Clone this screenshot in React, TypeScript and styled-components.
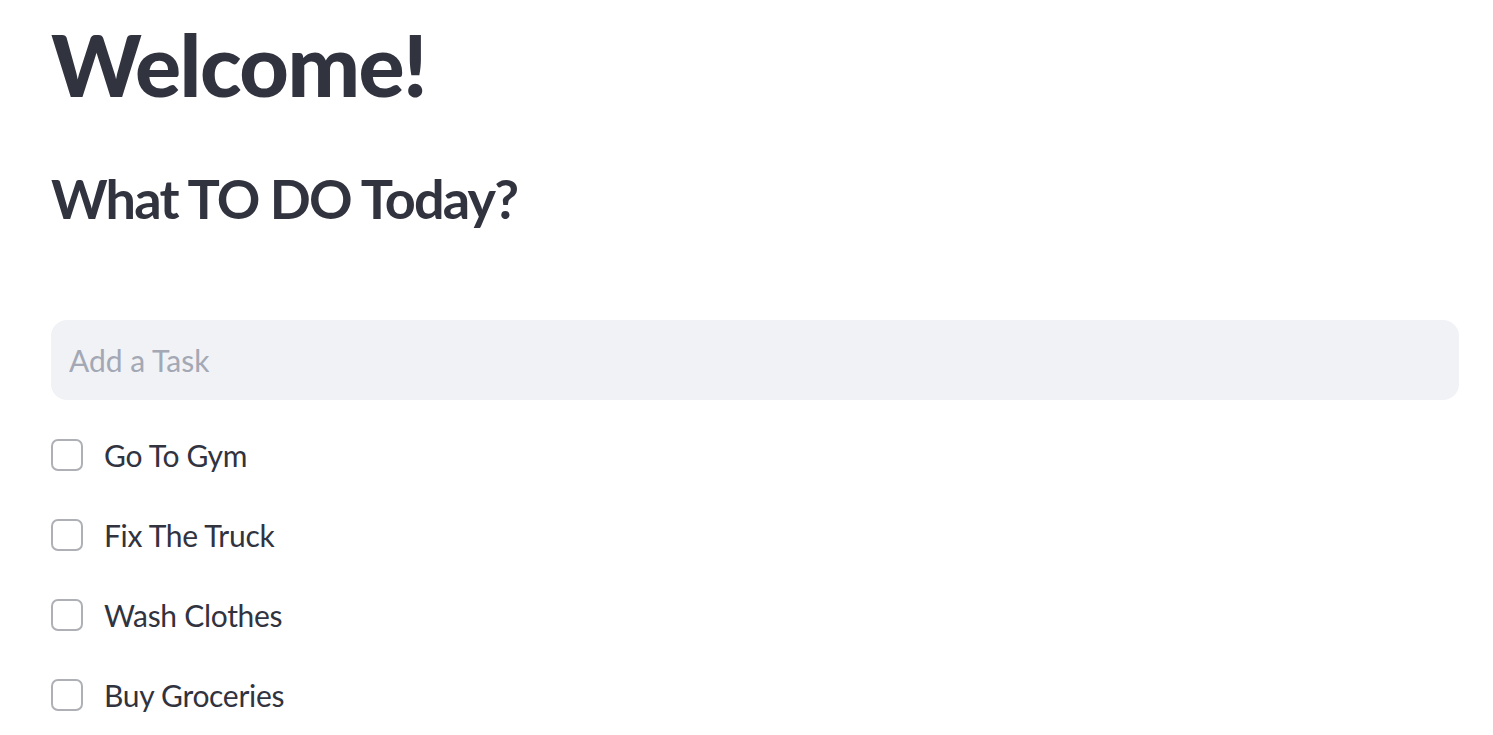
import React from "react";
import styled, { createGlobalStyle } from "styled-components";

const Global = createGlobalStyle`
  html, body { margin: 0; padding: 0; background: #ffffff; }
  body { font-family: "Lato", "Noto Sans", sans-serif; color: #31333f; }
`;

const Main = styled.main`
  display: flex;
  flex-direction: column;
  padding: 14px 34px 0 51px;
`;

const Title = styled.h1`
  margin: 0;
  font-family: "Lato", sans-serif;
  font-weight: 900;
  font-size: 86px;
  line-height: 100px;
  letter-spacing: -1.5px;
  color: #31333f;
`;

const Subtitle = styled.h2`
  margin: 50px 0 0 0;
  font-family: "Lato", sans-serif;
  font-weight: 700;
  font-size: 54px;
  line-height: 70px;
  letter-spacing: -1.8px;
  color: #31333f;
`;

const TaskInput = styled.input`
  margin-top: 86px;
  height: 80px;
  box-sizing: border-box;
  border: none;
  outline: none;
  border-radius: 16px;
  background: #f0f2f6;
  padding: 0 18px;
  font-family: "Lato", sans-serif;
  font-size: 30px;
  color: #31333f;
  &::placeholder { color: #a3a8b4; }
`;

const List = styled.ul`
  list-style: none;
  margin: 23px 0 0 0;
  padding: 0;
  display: flex;
  flex-direction: column;
  gap: 16px;
`;

const Row = styled.li`
  display: flex;
  align-items: center;
  height: 64px;
  gap: 21px;
`;

const Box = styled.span`
  width: 32px;
  height: 32px;
  box-sizing: border-box;
  border: 2px solid #aeb0b6;
  border-radius: 7px;
  background: #ffffff;
  flex: none;
`;

const Label = styled.span`
  font-family: "Lato", sans-serif;
  font-size: 30px;
  letter-spacing: -0.3px;
  color: #31333f;
`;

const tasks = ["Go To Gym", "Fix The Truck", "Wash Clothes", "Buy Groceries"];

export default function App() {
  return (
    <>
      <Global />
      <Main>
        <Title>Welcome!</Title>
        <Subtitle>What TO DO Today?</Subtitle>
        <TaskInput placeholder="Add a Task" />
        <List>
          {tasks.map((t) => (
            <Row key={t}>
              <Box />
              <Label>{t}</Label>
            </Row>
          ))}
        </List>
      </Main>
    </>
  );
}
